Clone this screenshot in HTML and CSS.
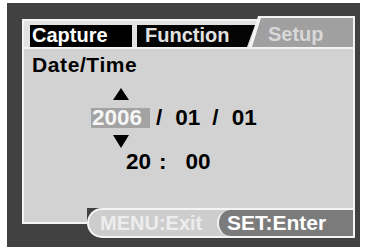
FILE: index.html
```html
<!DOCTYPE html>
<html>
<head>
<meta charset="utf-8">
<link rel="stylesheet" href="styles.css">
</head>
<body>
<div class="frame">
  <div class="panel">
    <div class="tabs">
      <div class="tab tab-capture">Capture</div>
      <div class="tab tab-function">Function</div>
      <div class="tab-setup"><div class="tab-setup-inner">Setup</div></div>
    </div>
    <div class="content">
      <div class="title">Date/Time</div>
      <div class="arrow arrow-up"></div>
      <div class="row date-row">
        <span class="sel">2006</span>
        <span class="sep s1">/</span>
        <span class="num n1">01</span>
        <span class="sep s2">/</span>
        <span class="num n2">01</span>
      </div>
      <div class="arrow arrow-down"></div>
      <div class="row time-row">
        <span class="num t1">20</span>
        <span class="colon">:</span>
        <span class="num t2">00</span>
      </div>
    </div>
    <div class="footer">
      <div class="foot-left"></div>
      <div class="pills">
        <div class="pill-menu">MENU:Exit</div>
        <div class="pill-set">SET:Enter</div>
      </div>
    </div>
  </div>
</div>
</body>
</html>
```
FILE: styles.css
```css
html, body {
  margin: 0;
  padding: 0;
  background: #ffffff;
}
body {
  font-family: "Liberation Sans", Arial, sans-serif;
  font-weight: bold;
  width: 365px;
  height: 248px;
  overflow: hidden;
}
.frame {
  margin: 3px 0 0 7px;
  width: 353px;
  height: 244px;
  box-sizing: border-box;
  background: #414141;
  padding: 16px 5px 0 15px;
}
.panel {
  width: 333px;
  box-sizing: border-box;
  border-top: 2px solid #f4f4f4;
  border-right: 2px solid #f4f4f4;
}
.tabs {
  height: 26px;
  border-left: 2px solid #f4f4f4;
  border-bottom: 2px solid #f4f4f4;
  background: #e2e2e2;
  display: flex;
  align-items: flex-end;
}
.tab {
  height: 22px;
  line-height: 21px;
  font-size: 20px;
  box-sizing: border-box;
}
.tab-capture {
  margin-left: 6px;
  width: 102px;
  background: #000;
  color: #fff;
  padding-left: 2px;
}
.tab-function {
  margin-left: 5px;
  width: 118px;
  background: #050505;
  color: #e2e2e2;
  padding-left: 8px;
  clip-path: polygon(0 0, 100% 0, calc(100% - 8px) 100%, 0 100%);
}
.tab-setup {
  margin-left: -6px;
  margin-right: -2px;
  flex: 1;
  height: 31px;
  background: #f4f4f4;
  clip-path: polygon(9px 0, 100% 0, 100% 100%, 0 100%);
  display: flex;
  flex-direction: column;
}
.tab-setup-inner {
  margin-top: 2px;
  margin-right: 2px;
  flex: 1;
  background: #a0a0a0;
  color: #d8d8d8;
  font-size: 20px;
  line-height: 21px;
  padding-left: 19px;
  padding-top: 6px;
  box-sizing: border-box;
  clip-path: polygon(12px 0, 100% 0, 100% 100%, 3px 100%);
}
.content {
  height: 159px;
  box-sizing: border-box;
  background: #d2d2d2;
  border-left: 2px solid #f4f4f4;
  display: flex;
  flex-direction: column;
  align-items: flex-start;
  color: #000;
}
.title {
  margin-top: 4px;
  margin-left: 8px;
  font-size: 21px;
  line-height: 24px;
  letter-spacing: 0.6px;
}
.arrow {
  width: 0;
  height: 0;
  border-left: 8.5px solid transparent;
  border-right: 8.5px solid transparent;
  margin-left: 89px;
}
.arrow-up {
  margin-top: 11px;
  border-bottom: 12px solid #000;
}
.arrow-down {
  margin-top: 7px;
  border-top: 13px solid #000;
}
.row {
  display: flex;
  font-size: 22.5px;
  line-height: 20px;
  height: 20px;
}
.date-row {
  margin-top: 8px;
  margin-left: 67px;
}
.sel {
  background: #a3a3a3;
  color: #f6f6f6;
  padding-left: 1px;
  padding-right: 8px;
}
.s1 { margin-left: 6px; }
.n1 { margin-left: 13px; }
.s2 { margin-left: 12px; }
.n2 { margin-left: 13px; }
.time-row {
  margin-top: 4px;
  margin-left: 102px;
}
.colon { margin-left: 8px; }
.t2 { margin-left: 19px; }
.footer {
  height: 30px;
  display: flex;
  align-items: flex-start;
}
.foot-left {
  width: 63px;
  height: 14px;
  background: #d2d2d2;
  border-left: 2px solid #f4f4f4;
  border-bottom: 2px solid #f4f4f4;
}
.pills {
  flex: 1;
  height: 30px;
  box-sizing: border-box;
  border: 2px solid #f4f4f4;
  border-right: none;
  border-radius: 15px 0 0 15px;
  background: #cdcdcd;
  display: flex;
  align-items: stretch;
}
.pill-menu {
  width: 128px;
  padding-left: 11px;
  box-sizing: border-box;
  font-size: 20px;
  line-height: 26px;
  color: #ededed;
}
.pill-set {
  flex: 1;
  background: #7b7b7b;
  border-left: 2px solid #f4f4f4;
  border-radius: 13px 0 0 13px;
  color: #ffffff;
  font-size: 21px;
  line-height: 26px;
  padding-left: 8px;
}
```
